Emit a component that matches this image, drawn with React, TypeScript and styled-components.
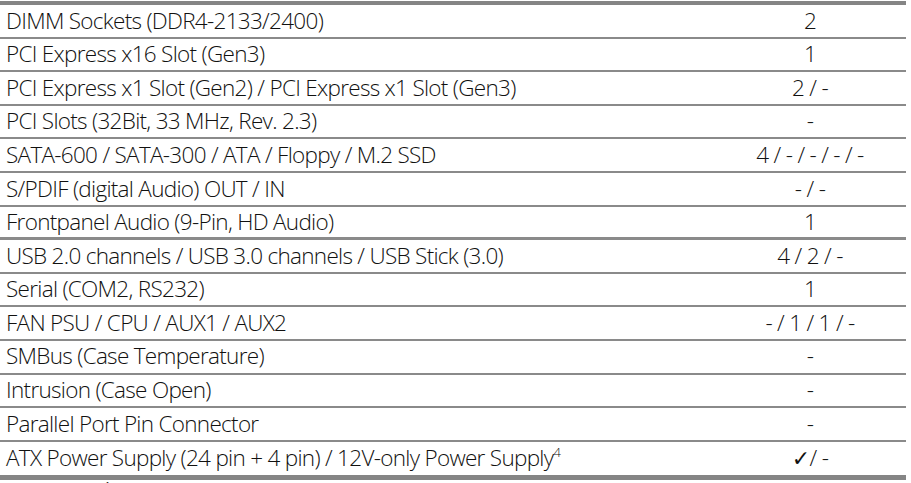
import React from 'react';
import styled, { createGlobalStyle } from 'styled-components';

const GlobalStyle = createGlobalStyle`
  html, body {
    margin: 0;
    padding: 0;
    background: #ffffff;
  }
  body {
    font-family: "Open Sans", "DejaVu Sans", sans-serif;
    color: #111110;
    overflow: hidden;
  }
`;

const Page = styled.div`
  width: 911px;
  height: 483px;
  overflow: hidden;
  padding-top: 1px;
  box-sizing: border-box;
`;

const Table = styled.div`
  width: 906px;
  border-top: 4px solid #858585;
  border-bottom: 5px solid #858585;
`;

const Row = styled.div<{ $thick?: boolean; $last?: boolean }>`
  display: flex;
  align-items: center;
  height: 33.6px;
  box-sizing: border-box;
  border-bottom: ${p => (p.$last ? 'none' : `${p.$thick ? 3 : 2}px solid #8a8a8a`)};
  font-size: 22.5px;
  font-weight: 300;
  letter-spacing: -0.7px;
  line-height: 1;
`;

const Label = styled.div`
  flex: 1;
  padding-left: 6px;
  white-space: nowrap;
`;

const Value = styled.div`
  width: 192px;
  text-align: center;
  white-space: nowrap;
`;

const Sup = styled.sup`
  font-size: 13px;
  vertical-align: 9px;
  line-height: 0;
`;

const Check = styled.span`
  font-family: "DejaVu Sans", sans-serif;
  font-size: 22px;
  font-weight: bold;
`;

const Footnote = styled.div`
  padding-left: 104px;
  font-size: 12px;
  line-height: 1;
  margin-top: 1px;
`;

type Item = { label: React.ReactNode; value: React.ReactNode; thick?: boolean };

const rows: Item[] = [
  { label: 'DIMM Sockets (DDR4-2133/2400)', value: '2' },
  { label: 'PCI Express x16 Slot (Gen3)', value: '1' },
  { label: 'PCI Express x1 Slot (Gen2) / PCI Express x1 Slot (Gen3)', value: '2 / -' },
  { label: 'PCI Slots (32Bit, 33 MHz, Rev. 2.3)', value: '-' },
  { label: 'SATA-600 / SATA-300 / ATA / Floppy / M.2 SSD', value: '4 / - / - / - / -' },
  { label: 'S/PDIF (digital Audio) OUT / IN', value: '- / -' },
  { label: 'Frontpanel Audio (9-Pin, HD Audio)', value: '1', thick: true },
  { label: 'USB 2.0 channels / USB 3.0 channels / USB Stick (3.0)', value: '4 / 2 / -' },
  { label: 'Serial (COM2, RS232)', value: '1' },
  { label: 'FAN PSU / CPU / AUX1 / AUX2', value: '- / 1 / 1 / -' },
  { label: 'SMBus (Case Temperature)', value: '-' },
  { label: 'Intrusion (Case Open)', value: '-' },
  { label: 'Parallel Port Pin Connector', value: '-' },
  {
    label: (
      <>
        ATX Power Supply (24 pin + 4 pin) / 12V-only Power Supply<Sup>4</Sup>
      </>
    ),
    value: (
      <>
        <Check>✓</Check>/ -
      </>
    ),
  },
];

export default function App() {
  return (
    <Page>
      <GlobalStyle />
      <Table>
        {rows.map((r, i) => (
          <Row key={i} $thick={r.thick} $last={i === rows.length - 1}>
            <Label>{r.label}</Label>
            <Value>{r.value}</Value>
          </Row>
        ))}
      </Table>
      <Footnote>1</Footnote>
    </Page>
  );
}
